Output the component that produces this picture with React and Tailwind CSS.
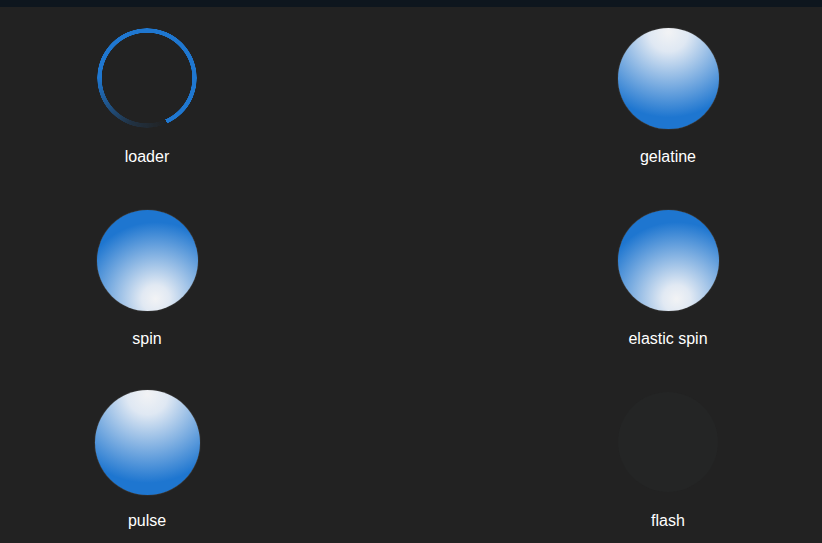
const BLUE = '#1f77d0'

function Ring() {
  return (
    <div className="w-[100px] h-[100px] rounded-full bg-[conic-gradient(from_156deg,rgba(31,119,208,0)_0deg,rgba(31,119,208,0.2)_45deg,#1f77d0_115deg,#1f77d0_360deg)] [mask:radial-gradient(circle_at_center,transparent_45px,#000_45.5px,#000_49.5px,transparent_50px)]" />
  )
}

function Cell({ label, children }) {
  return (
    <div className="w-[200px] h-[182px] flex flex-col items-center pt-[18px]">
      <div className="w-[106px] h-[106px] flex items-center justify-center">{children}</div>
      <div className="mt-[16px] leading-[20px] text-[16px] text-white">{label}</div>
    </div>
  )
}

export default function App() {
  return (
    <div className="h-[543px] overflow-hidden bg-[#222222] font-['Liberation_Sans',Arial,sans-serif]">
      <div className="h-[7px] bg-[#0e161e]" />
      <div className="grid grid-cols-[200px_200px] justify-between pl-[47px] pr-[54px]">
        <Cell label="loader">
          <Ring />
        </Cell>
        <Cell label="gelatine">
          <div className="w-[101px] h-[101px] rounded-full bg-[radial-gradient(circle_at_50%_4%,#f2f3f5_0%,#dfe8f3_18%,#1e76d0_78%)] shadow-[0_0_1px_rgba(190,190,190,0.7)]" />
        </Cell>
        <Cell label="spin">
          <div className="w-[101px] h-[101px] rounded-full bg-[radial-gradient(circle_at_58%_88%,#f2f3f5_0%,#e1e9f3_13%,#1e76d0_72%)] shadow-[0_0_1px_rgba(190,190,190,0.7)]" />
        </Cell>
        <Cell label="elastic spin">
          <div className="w-[101px] h-[101px] rounded-full bg-[radial-gradient(circle_at_58%_88%,#f2f3f5_0%,#e1e9f3_13%,#1e76d0_72%)] shadow-[0_0_1px_rgba(190,190,190,0.7)]" />
        </Cell>
        <Cell label="pulse">
          <div className="w-[105px] h-[105px] rounded-full bg-[radial-gradient(circle_at_50%_4%,#f2f3f5_0%,#dfe8f3_18%,#1e76d0_78%)] shadow-[0_0_1px_rgba(190,190,190,0.7)]" />
        </Cell>
        <Cell label="flash">
          <div className="w-[100px] h-[100px] rounded-full bg-[#242525]" />
        </Cell>
      </div>
    </div>
  )
}
